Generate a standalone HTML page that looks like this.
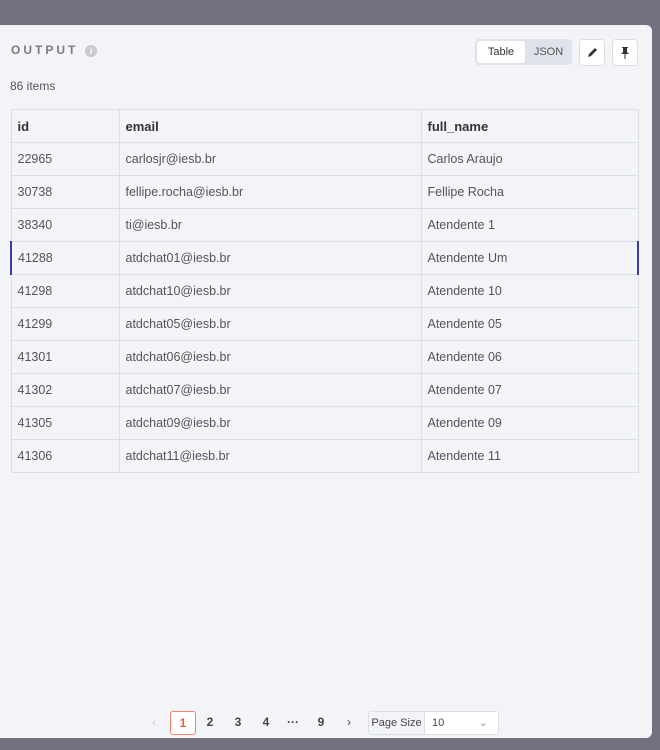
<!DOCTYPE html>
<html><head><style>
body{margin:0;width:660px;height:750px;background:#74707f;position:relative;overflow:hidden;font-family:"Liberation Sans",sans-serif}
.panel{position:absolute;left:0;top:25px;width:652px;height:713px;background:#f3f4f8;border-radius:0 6px 6px 0}
.title{position:absolute;left:11px;top:43px;font-size:12px;letter-spacing:3px;color:#7a7a88;font-weight:bold}
.info{position:absolute;left:85px;top:45px;width:12px;height:12px;border-radius:50%;background:#c8c8cf;color:#fff;font-size:9px;text-align:center;line-height:12px;font-weight:bold}
.items{position:absolute;left:10px;top:79px;font-size:12px;color:#555}
.tog{position:absolute;left:475px;top:39px;width:97px;height:26px;background:#dfe2ea;border-radius:4px}
.tog .a{position:absolute;left:2px;top:2px;width:48px;height:22px;background:#fff;border-radius:3px;font-size:11px;line-height:22px;text-align:center;color:#333}
.tog .b{position:absolute;left:52px;top:2px;width:43px;line-height:22px;font-size:11px;text-align:center;color:#555}
.btn{position:absolute;top:39px;width:24px;height:25px;background:#fff;border:1px solid #dcdfe6;border-radius:4px}
table{position:absolute;left:10px;top:109px;border-collapse:collapse;font-size:12.5px;color:#555}
td,th{border:1px solid #dcdfe6;height:32px;padding:0 0 0 6px;text-align:left}
th{color:#333;font-weight:bold;font-size:13px}
tr.sel td:first-child{border-left:2px solid #3b3bb0}
tr.sel td:last-child{border-right:2px solid #3b3bb0}
.pg{position:absolute;top:711px;font-size:12px;color:#444;font-weight:bold;width:24px;height:22px;line-height:22px;text-align:center}
</style></head><body>
<div class="panel"></div>
<div class="title">OUTPUT</div><div class="info">i</div>
<div class="tog"><div class="a">Table</div><div class="b">JSON</div></div>
<div class="btn" style="left:579px"><svg width="24" height="25"><path d="M8 17l1-3 6-6 2 2-6 6z" fill="#333"/></svg></div>
<div class="btn" style="left:612px"><svg width="24" height="25"><path d="M9 7h6v1h-1v4l2 2h-8l2-2V8H9z M11.5 14h1v5h-1z" fill="#333"/></svg></div>
<div class="items">86 items</div>
<table>
<tr><th style="width:101px">id</th><th style="width:295px">email</th><th style="width:210px">full_name</th></tr>
<tr><td>22965</td><td>carlosjr@iesb.br</td><td>Carlos Araujo</td></tr>
<tr><td>30738</td><td>fellipe.rocha@iesb.br</td><td>Fellipe Rocha</td></tr>
<tr><td>38340</td><td>ti@iesb.br</td><td>Atendente 1</td></tr>
<tr class="sel"><td>41288</td><td>atdchat01@iesb.br</td><td>Atendente Um</td></tr>
<tr><td>41298</td><td>atdchat10@iesb.br</td><td>Atendente 10</td></tr>
<tr><td>41299</td><td>atdchat05@iesb.br</td><td>Atendente 05</td></tr>
<tr><td>41301</td><td>atdchat06@iesb.br</td><td>Atendente 06</td></tr>
<tr><td>41302</td><td>atdchat07@iesb.br</td><td>Atendente 07</td></tr>
<tr><td>41305</td><td>atdchat09@iesb.br</td><td>Atendente 09</td></tr>
<tr><td>41306</td><td>atdchat11@iesb.br</td><td>Atendente 11</td></tr>
</table>
<div class="pg" style="left:142px;color:#ccc;font-weight:normal">‹</div>
<div class="pg" style="left:170px;border:1px solid #f0836a;border-radius:3px;color:#ee5a3c;background:#fff">1</div>
<div class="pg" style="left:198px">2</div>
<div class="pg" style="left:226px">3</div>
<div class="pg" style="left:254px">4</div>
<div class="pg" style="left:281px">···</div>
<div class="pg" style="left:309px">9</div>
<div class="pg" style="left:337px;font-weight:normal">›</div>
<div style="position:absolute;left:368px;top:711px;width:129px;height:22px;border:1px solid #dcdfe6;border-radius:3px;background:#fff;font-size:11px;color:#444;line-height:22px">
<span style="display:inline-block;width:55px;border-right:1px solid #dcdfe6;text-align:center;background:#f3f4f8">Page Size</span><span style="padding-left:7px">10</span><span style="position:absolute;right:10px;color:#999">⌄</span></div>
</body></html>
